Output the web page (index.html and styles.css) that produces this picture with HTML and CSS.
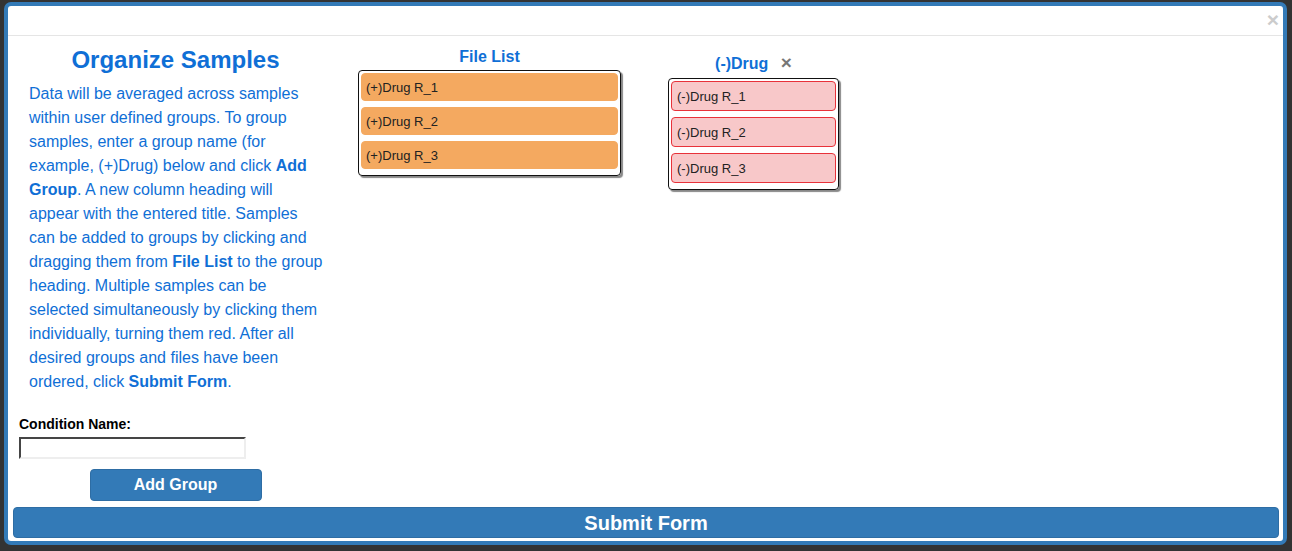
FILE: index.html
```html
<!DOCTYPE html>
<html>
<head>
<meta charset="utf-8">
<link rel="stylesheet" href="styles.css">
</head>
<body>
<div class="modal">
  <div class="modal-header"><span class="close">&times;</span></div>
  <div class="modal-body">
    <div class="row">
      <div class="left-col">
        <h2 class="title">Organize Samples</h2>
        <p class="intro">Data will be averaged across samples within user defined groups. To group samples, enter a group name (for example, (+)Drug) below and click <b>Add Group</b>. A new column heading will appear with the entered title. Samples can be added to groups by clicking and dragging them from <b>File List</b> to the group heading. Multiple samples can be selected simultaneously by clicking them individually, turning them red. After all desired groups and files have been ordered, click <b>Submit Form</b>.</p>
        <label class="cond-label">Condition Name:</label>
        <input class="cond-input" type="text">
        <div class="add-wrap"><button class="btn add-btn">Add Group</button></div>
      </div>
      <div class="groups">
        <div class="group file-group">
          <div class="group-title">File List</div>
          <div class="group-box file-box">
            <div class="item orange">(+)Drug R_1</div>
            <div class="item orange">(+)Drug R_2</div>
            <div class="item orange">(+)Drug R_3</div>
          </div>
        </div>
        <div class="group drug-group">
          <div class="group-title">(-)Drug <span class="remove">&times;</span></div>
          <div class="group-box drug-box">
            <div class="item pink">(-)Drug R_1</div>
            <div class="item pink">(-)Drug R_2</div>
            <div class="item pink">(-)Drug R_3</div>
          </div>
        </div>
      </div>
    </div>
    <button class="btn submit-btn">Submit Form</button>
  </div>
</div>
</body>
</html>
```

FILE: styles.css
```css
html, body {
  margin: 0;
  padding: 0;
  background: #333333;
  height: 551px;
  overflow: hidden;
  font-family: "Liberation Sans", Arial, sans-serif;
}
body {
  padding: 2px 5px 6px 4px;
  box-sizing: border-box;
}
.modal {
  background: #fff;
  border: 4px solid #337ab7;
  border-radius: 7px;
  height: 543px;
  box-sizing: border-box;
  display: flex;
  flex-direction: column;
  overflow: hidden;
}
.modal-header {
  flex: 0 0 auto;
  height: 29px;
  border-bottom: 1px solid #e5e5e5;
  position: relative;
}
.close {
  position: absolute;
  right: 4px;
  top: 3px;
  font-size: 21px;
  font-weight: bold;
  line-height: 21px;
  color: #cccccc;
}
.modal-body {
  padding: 0 4px 0 5px;
  display: flex;
  flex-direction: column;
  flex: 1 1 auto;
  min-height: 0;
}
.row {
  display: flex;
  flex: 1 1 auto;
  min-height: 0;
}
.left-col {
  width: 325px;
  flex: 0 0 auto;
  display: flex;
  flex-direction: column;
}
.left-col > * { flex-shrink: 0; }
.title {
  margin: 11px 0 0 0;
  font-size: 24px;
  line-height: 26px;
  font-weight: bold;
  color: #0f6fd6;
  text-align: center;
}
.intro {
  margin: 9px 0 0 16px;
  width: 295px;
  font-size: 16px;
  line-height: 24px;
  color: #0f6fd6;
}
.intro b { font-weight: bold; }
.cond-label {
  margin: 22px 0 0 6px;
  font-size: 14px;
  font-weight: bold;
  line-height: 16px;
  color: #000;
}
.cond-input {
  margin: 5px 0 0 6px;
  width: 227px;
  height: 22px;
  box-sizing: border-box;
  border: 2px inset #eeeeee;
  border-top-color: #999;
  border-left-color: #999;
  padding: 1px 2px;
  font-size: 13px;
}
.add-wrap {
  display: flex;
  justify-content: center;
  margin-top: 10px;
}
.btn {
  background: #337ab7;
  color: #fff;
  border: 1px solid #2e6da4;
  border-radius: 4px;
  font-family: "Liberation Sans", Arial, sans-serif;
  font-weight: bold;
  cursor: pointer;
}
.add-btn {
  width: 172px;
  height: 32px;
  font-size: 16px;
  padding: 0;
}
.submit-btn {
  flex: 0 0 auto;
  margin: 5px 0 3px 0;
  height: 31px;
  font-size: 20px;
  line-height: 20px;
  padding: 0;
  width: 100%;
}
.groups {
  display: flex;
  align-items: flex-start;
  gap: 47px;
  margin-left: 20px;
}
.group {
  display: flex;
  flex-direction: column;
  align-items: stretch;
}
.group-title {
  font-size: 16px;
  font-weight: bold;
  color: #0f6fd6;
  text-align: center;
  line-height: 18px;
  margin-top: 12px;
  margin-bottom: 4px;
}
.drug-group .group-title {
  margin-top: 18px;
  margin-bottom: 5px;
}
.remove {
  color: #777;
  font-size: 19px;
  margin-left: 8px;
}
.group-box {
  border: 1px solid #111;
  border-radius: 4px;
  box-shadow: 2px 2px 1px #888;
  padding: 2px 2px 0 2px;
}
.file-box { width: 263px; box-sizing: border-box; }
.drug-box { width: 171px; box-sizing: border-box; }
.item {
  border-radius: 4px;
  font-size: 13px;
  color: #222;
  padding: 0 5px;
  margin-bottom: 6px;
  display: flex;
  align-items: center;
}
.orange {
  background: #f4a960;
  border: 1px solid #f4a960;
  height: 28px;
  box-sizing: border-box;
  padding-left: 4px;
}
.pink {
  background: #f8c8c9;
  border: 1px solid #e8323a;
  height: 30px;
  box-sizing: border-box;
}
```
